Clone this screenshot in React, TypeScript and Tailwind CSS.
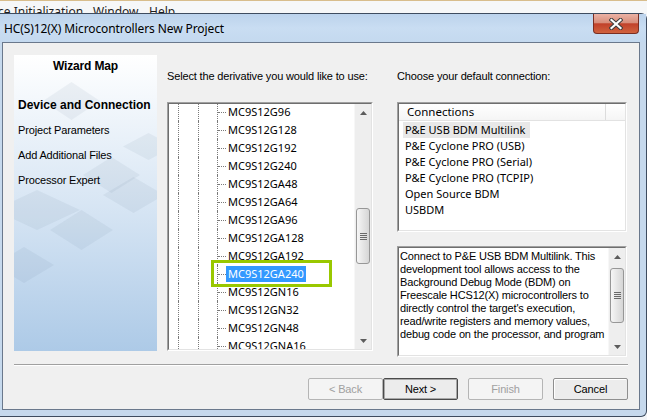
import React from "react";

const derivatives = [
  "MC9S12G96",
  "MC9S12G128",
  "MC9S12G192",
  "MC9S12G240",
  "MC9S12GA48",
  "MC9S12GA64",
  "MC9S12GA96",
  "MC9S12GA128",
  "MC9S12GA192",
  "MC9S12GA240",
  "MC9S12GN16",
  "MC9S12GN32",
  "MC9S12GN48",
  "MC9S12GNA16",
];

const connections = [
  "P&E USB BDM Multilink",
  "P&E Cyclone PRO (USB)",
  "P&E Cyclone PRO (Serial)",
  "P&E Cyclone PRO (TCPIP)",
  "Open Source BDM",
  "USBDM",
];

const description = [
  "Connect to P&E USB BDM Multilink. This",
  "development tool allows access to the",
  "Background Debug Mode (BDM) on",
  "Freescale HCS12(X) microcontrollers to",
  "directly control the target's execution,",
  "read/write registers and memory values,",
  "debug code on the processor, and program",
];

// faint logo diamonds behind the wizard map: [x0, y0, x1, y1]
const diamonds = [
  [29, 27, 86, 65],
  [109, 78, 160, 105],
  [69, 102, 126, 138],
  [-20, 135, 66, 175],
  [36, 155, 99, 195],
  [89, 122, 150, 158],
  [-20, 192, 40, 228],
];

function Arrow({ up }: { up?: boolean }) {
  return (
    <svg width="7" height="4" viewBox="0 0 7 4">
      <path d={up ? "M0 4 L3.5 0 L7 4 Z" : "M0 0 L3.5 4 L7 0 Z"} fill="#5c5c5c" />
    </svg>
  );
}

function ScrollBar({ thumbClass }: { thumbClass: string }) {
  return (
    <div className="w-[17px] h-full shrink-0 flex flex-col bg-[#eeeeee] border-l border-[#f7f7f7]">
      <div className="h-[17px] flex items-center justify-center">
        <Arrow up />
      </div>
      <div className="flex-1">
        <div
          className={`${thumbClass} mx-[1px] rounded-[3px] border border-[#979797] bg-linear-to-r from-[#f6f6f6] to-[#d6d6d6] flex flex-col items-center justify-center gap-[1px]`}
        >
          <div className="w-[7px] h-[1px] bg-[#6a6a6a]" />
          <div className="w-[7px] h-[1px] bg-[#6a6a6a]" />
          <div className="w-[7px] h-[1px] bg-[#6a6a6a]" />
          <div className="w-[7px] h-[1px] bg-[#6a6a6a]" />
        </div>
      </div>
      <div className="h-[17px] flex items-center justify-center">
        <Arrow />
      </div>
    </div>
  );
}

function Button({ label, disabled, primary }: { label: string; disabled?: boolean; primary?: boolean }) {
  const look = disabled
    ? "border-[#b5b5b5] text-[#a0a0a0] bg-[#f4f4f4]"
    : primary
    ? "border-[#4a4a4a] text-black bg-[#ececec] shadow-[inset_0_0_0_1px_#a8a8a8]"
    : "border-[#8f8f8f] text-black bg-[#ececec] shadow-[inset_1px_1px_0_#ffffff]";
  return (
    <div className={`w-[75px] h-[22px] border rounded-[2px] flex items-center justify-center ${look}`}>
      {label}
    </div>
  );
}

export default function App() {
  return (
    <div className="w-[647px] h-[420px] overflow-hidden flex flex-col bg-[#f2f4f7] font-['Liberation_Sans',Arial,sans-serif] text-[11px] tracking-[-0.15px] text-black">
      {/* menu bar of the window behind, half hidden by the dialog */}
      <div className="h-[13px] shrink-0 overflow-hidden border-t border-[#d8bd8c] bg-[#f6f7f8] font-['Noto_Sans',sans-serif] text-[12px] leading-[16px] tracking-normal text-[#1e1e1e]">
        <div className="flex pt-[3px]">
          <span className="ml-[-2px] w-[95px]">ce Initialization</span>
          <span className="w-[56px]">Window</span>
          <span>Help</span>
        </div>
      </div>

      {/* dialog window */}
      <div className="h-[404px] shrink-0 flex flex-col border-t border-r border-b border-[#3e4c5f] rounded-tr-[6px] rounded-br-[6px] bg-[#c6d9ed]">
        <div className="h-[28px] shrink-0 flex items-start justify-between bg-linear-to-b from-[#bcd3ec] via-[#c9ddf2] to-[#c4d9ef]">
          <div className="pl-[4px] pt-[6px] font-['Noto_Sans',sans-serif] text-[12px] leading-[18px] tracking-[-0.1px]">
            HC(S)12(X) Microcontrollers New Project
          </div>
          <div className="mr-[7px] w-[46px] h-[20px] rounded-b-[4px] border border-t-0 border-[#7a2e22] bg-[linear-gradient(#ebb2a5,#d88e7b_45%,#c1412a_52%,#d0633f)] flex items-center justify-center">
            <svg width="14" height="12" viewBox="0 0 14 12">
              <path d="M2.5 2 L11.5 10 M11.5 2 L2.5 10" stroke="#3d3d3d" strokeWidth="4.2" strokeLinecap="square" />
              <path d="M2.5 2 L11.5 10 M11.5 2 L2.5 10" stroke="#ffffff" strokeWidth="2.2" strokeLinecap="square" />
            </svg>
          </div>
        </div>

        {/* client area */}
        <div className="h-[368px] shrink-0 ml-[2px] mr-[6px] border border-[#6a788c] bg-[#f0f0f0] flex flex-col">
          <div className="mt-[12px] ml-[11px] flex items-start">
            {/* wizard map */}
            <div className="relative w-[143px] h-[296px] shrink-0 overflow-hidden bg-linear-to-b from-white via-[#d8e6f4] to-[#adcae7]">
              <svg className="absolute inset-0" width="143" height="296">
                {diamonds.map(([x0, y0, x1, y1], i) => {
                  const cx = (x0 + x1) / 2;
                  const cy = (y0 + y1) / 2;
                  return (
                    <polygon
                      key={i}
                      points={`${x0},${cy} ${cx},${y0} ${x1},${cy} ${cx},${y1}`}
                      fill="#4a5f7c"
                      fillOpacity="0.07"
                    />
                  );
                })}
              </svg>
              <div className="relative flex flex-col pl-[4px] pt-[4px] leading-[14px] gap-[11px]">
                <div className="text-center font-bold text-[12px] pr-[4px] mb-[14px]">Wizard Map</div>
                <div className="font-bold text-[12px] tracking-normal">Device and Connection</div>
                <div>Project Parameters</div>
                <div>Add Additional Files</div>
                <div>Processor Expert</div>
              </div>
            </div>

            {/* derivative tree */}
            <div className="ml-[10px] w-[206px] shrink-0">
              <div className="mt-[15px] leading-[13px]">Select the derivative you would like to use:</div>
              <div className="relative mt-[19px] h-[249px] border border-t-[#a0a0a0] border-l-[#a0a0a0] border-r-white border-b-white">
                <div className="h-full flex border border-t-[#6e6e6e] border-l-[#6e6e6e] border-r-[#e3e3e3] border-b-[#e3e3e3] bg-white">
                  <div className="flex-1 overflow-hidden">
                    <div className="mt-[-1px] font-['Noto_Sans',sans-serif] text-[11px] tracking-normal">
                      {derivatives.map((d) => (
                        <div key={d} className="h-[18px] flex pl-[9px]">
                          <div className="w-[20px] border-l border-dotted border-[#7a7a7a]" />
                          <div className="w-[19px] border-l border-dotted border-[#7a7a7a]" />
                          <div className="w-[9px] border-l border-dotted border-[#7a7a7a] flex items-center">
                            <div className="w-full border-t border-dotted border-[#7a7a7a]" />
                          </div>
                          <span
                            className={`self-center h-[16px] leading-[16px] px-[2px] ${
                              d === "MC9S12GA240" ? "bg-[#3399ff] text-white" : ""
                            }`}
                          >
                            {d}
                          </span>
                        </div>
                      ))}
                    </div>
                  </div>
                  <ScrollBar thumbClass="mt-[87px] h-[56px]" />
                </div>
                {/* green highlight frame drawn over the tree */}
                <div className="absolute left-[43px] top-[157px] w-[121px] h-[27px] border-[3px] border-[#99c800]" />
              </div>
            </div>

            {/* connections */}
            <div className="ml-[24px] w-[230px] shrink-0">
              <div className="mt-[15px] leading-[13px]">Choose your default connection:</div>
              <div className="mt-[19px] h-[130px] border border-t-[#a0a0a0] border-l-[#a0a0a0] border-r-white border-b-white">
                <div className="h-full border border-t-[#6e6e6e] border-l-[#6e6e6e] border-r-[#e3e3e3] border-b-[#e3e3e3] bg-white font-['Noto_Sans',sans-serif] tracking-normal">
                  <div className="h-[17px] flex border-b border-[#e2e2e2] bg-linear-to-b from-white to-[#f5f5f5]">
                    <div className="w-[207px] border-r border-[#dcdcdc] pl-[8px] text-[11.5px] leading-[16px]">Connections</div>
                  </div>
                  <div className="pt-[1px] pl-[4px] text-[11px]">
                    {connections.map((c, i) => (
                      <div key={c} className="h-[16px] flex">
                        <span className={`leading-[16px] pl-[2px] pr-[5px] ${i === 0 ? "bg-[#e8e8e8]" : ""}`}>{c}</span>
                      </div>
                    ))}
                  </div>
                </div>
              </div>

              <div className="mt-[14px] h-[111px] border border-t-[#a0a0a0] border-l-[#a0a0a0] border-r-white border-b-white">
                <div className="h-full flex border border-t-[#6e6e6e] border-l-[#6e6e6e] border-r-[#e3e3e3] border-b-[#e3e3e3] bg-white">
                  <div className="flex-1 pl-[1px] pt-[2px] leading-[13px] whitespace-nowrap overflow-hidden">
                    {description.map((l) => (
                      <div key={l}>{l}</div>
                    ))}
                  </div>
                  <ScrollBar thumbClass="mt-[3px] h-[55px]" />
                </div>
              </div>
            </div>
          </div>

          {/* separator */}
          <div className="mt-[7px] ml-[11px] w-[614px] h-[2px] border-t border-[#a0a0a0] border-b border-b-white" />

          {/* buttons */}
          <div className="mt-[12px] pr-[11px] flex justify-end">
            <Button label="< Back" disabled />
            <Button label="Next >" primary />
            <div className="w-[10px]" />
            <Button label="Finish" disabled />
            <div className="w-[10px]" />
            <Button label="Cancel" />
          </div>
        </div>
      </div>
    </div>
  );
}
